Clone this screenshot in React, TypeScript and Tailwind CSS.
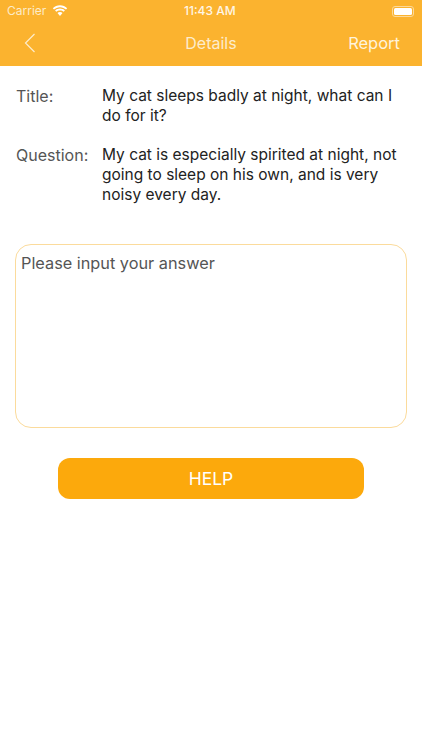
export default function App() {
  return (
    <div className="w-[422px] h-[750px] bg-white flex flex-col font-['Inter',sans-serif] overflow-hidden">
      <div className="h-[66px] bg-[#fbb32f] text-white flex flex-col">
        <div className="h-[22px] flex items-center justify-between pl-[7px] pr-[8px] relative">
          <div className="flex items-center gap-[6px]">
            <span className="text-[12px] text-[#fdebc8] leading-none">Carrier</span>
            <svg width="16" height="12" viewBox="0 0 16 12" fill="white">
              <path d="M8 2.200c2.300 0 4.400.9 6 2.400l1.200-1.300C13.300 1.400 10.800.3 8 .3S2.700 1.400.8 3.300L2 4.600c1.600-1.500 3.700-2.400 6-2.400z" />
              <path d="M8 5.400c1.400 0 2.700.5 3.700 1.400l1.200-1.300C11.600 4.300 9.900 3.600 8 3.600s-3.600.7-4.900 1.900l1.200 1.300c1-.9 2.300-1.400 3.700-1.400z" />
              <path d="M8 7c-1 0-1.800.3-2.500.9L8 11l2.500-3.100C9.800 7.300 9 7 8 7z" />
            </svg>
          </div>
          <span className="absolute left-[184px] text-[12px] font-medium leading-none text-[#fff6e6]">11:43 AM</span>
          <div className="w-[22px] h-[11px] rounded-[3px] border border-[#fdd999] p-[1px] flex">
            <div className="flex-1 bg-white rounded-[1.5px]" />
          </div>
        </div>
        <div className="flex-1 flex items-center justify-between pl-[24px] pr-[22px] pb-[2px] relative">
          <svg width="12" height="20" viewBox="0 0 12 20" fill="none" stroke="#fdeccb" strokeWidth="1.2">
            <path d="M10.500 1 1.500 10l9 9" />
          </svg>
          <span className="absolute left-0 right-0 text-center text-[16px] text-[#fdeccb] leading-none">Details</span>
          <span className="text-[16.500px] text-[#fff3dc] leading-none">Report</span>
        </div>
      </div>
      <div className="flex flex-col px-[16px] pt-[20px] gap-[19px]">
        <div className="flex leading-[20px]">
          <div className="w-[86px] text-[16px] text-[#555555]">Title:</div>
          <div className="w-[298px] text-[15.500px] text-[#222222]">My cat sleeps badly at night, what can I do for it?</div>
        </div>
        <div className="flex leading-[20px]">
          <div className="w-[86px] text-[16px] text-[#555555]">Question:</div>
          <div className="w-[302px] text-[15.500px] text-[#222222]">My cat is especially spirited at night, not going to sleep on his own, and is very noisy every day.</div>
        </div>
      </div>
      <div className="mx-[15px] mt-[39px] h-[184px] border border-[#fbdb9c] rounded-[16px] px-[5px] pt-[8px] text-[16.300px] leading-[21px] text-[#555555]">
        Please input your answer
      </div>
      <button className="mt-[30px] ml-[58px] w-[306px] h-[41px] bg-[#fca90c] rounded-[12px] text-white text-[17.500px] leading-none">HELP</button>
    </div>
  );
}
